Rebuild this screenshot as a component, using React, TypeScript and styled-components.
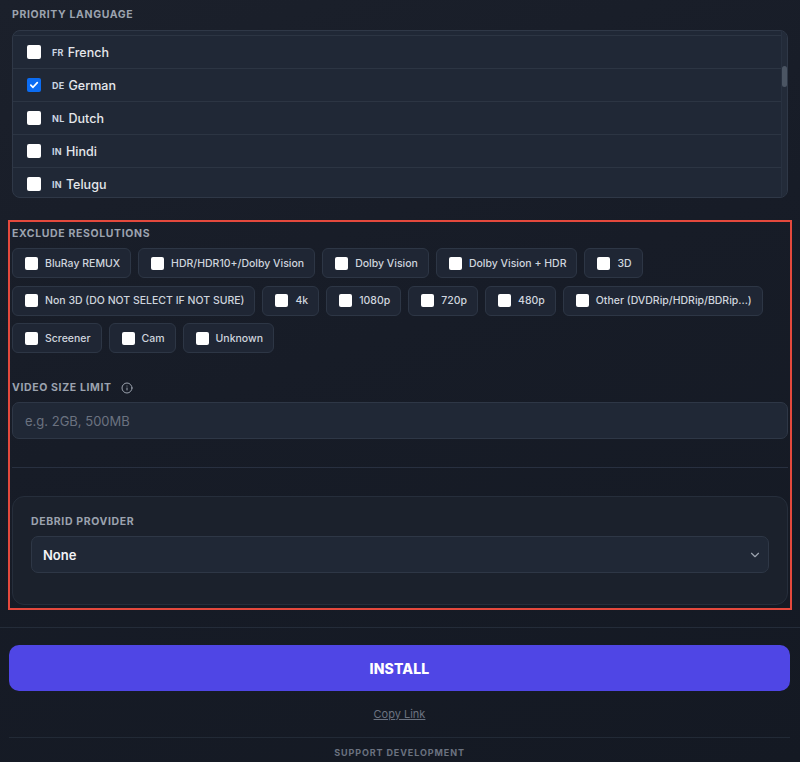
import React from 'react';
import styled, { createGlobalStyle } from 'styled-components';
import { ChevronDown, Info } from 'lucide-react';

const GlobalStyle = createGlobalStyle`
    html, body {
        margin: 0;
        padding: 0;
        background: #161b26;
    }
    body {
        font-family: Inter, "Noto Sans", "Liberation Sans", sans-serif;
        color: #e5e7eb;
        -webkit-font-smoothing: antialiased;
    }
    * {
        box-sizing: border-box;
    }
`;

// ---------------- <Page /> ---------------

const Page = styled.div`
    min-height: 762px;
    background: linear-gradient(160deg, #1b202b 0%, #171c27 45%, #141923 100%);
    padding-top: 9px;
`;

const Content = styled.div`
    padding: 0 12px;
`;

const SectionLabel = styled.div<{ $gap?: number }>`
    display: flex;
    align-items: center;
    gap: 9px;
    font-size: 10.5px;
    line-height: 12px;
    font-weight: 700;
    letter-spacing: 0.06em;
    text-transform: uppercase;
    color: #9ca3af;
    margin-bottom: ${(p) => p.$gap ?? 8}px;
`;

// ---------------- <LanguageList /> ---------------
// the list is shown scrolled: the rows above French are out of view,
// only the last pixels of the previous row remain at the top

const LanguageList = styled.div`
    display: flex;
    height: 168px;
    overflow: hidden;
    background: #202836;
    border: 1px solid #2f3847;
    border-radius: 8px;
`;

const Rows = styled.div`
    flex: 1;
    min-width: 0;
`;

const ScrolledEdge = styled.div`
    height: 5px;
    border-bottom: 1px solid #2c3543;
`;

const ScrollTrack = styled.div`
    width: 6px;
    flex-shrink: 0;
    background: #232b39;
    border-left: 1px solid #283140;
`;

const ScrollThumb = styled.div<{ $top: number; $size: number }>`
    margin-top: ${(p) => p.$top}px;
    height: ${(p) => p.$size}px;
    border-radius: 3px;
    background: #4b5563;
`;

const LanguageRow = styled.label`
    display: flex;
    align-items: center;
    height: 33px;
    padding-left: 14px;
    border-bottom: 1px solid #2c3543;
`;

const LangCode = styled.span`
    margin-left: 11px;
    margin-right: 4px;
    font-size: 9px;
    font-weight: 700;
    letter-spacing: 0.03em;
    color: #cbd5e1;
`;

const LangName = styled.span`
    font-size: 12.5px;
    font-weight: 500;
    color: #e5e7eb;
`;

// ---------------- <CheckBox /> ---------------

const Box = styled.span<{ $size: number; $checked?: boolean }>`
    display: inline-flex;
    align-items: center;
    justify-content: center;
    flex-shrink: 0;
    width: ${(p) => p.$size}px;
    height: ${(p) => p.$size}px;
    border-radius: 2px;
    background: ${(p) => (p.$checked ? '#0b6cf2' : '#ffffff')};
`;

const CheckBox = ({ size, checked }: { size: number; checked?: boolean }) => (
    <Box $size={size} $checked={checked}>
        {checked && (
            <svg width={size - 4} height={size - 4} viewBox="0 0 10 10">
                <path d="M1.8 5.2 L4 7.3 L8.3 2.6" fill="none" stroke="#fff" strokeWidth="1.7"
                    strokeLinecap="round" strokeLinejoin="round" />
            </svg>
        )}
    </Box>
);

// ---------------- <HighlightSection /> ---------------

const HighlightSection = styled.section`
    margin-top: 26px;
    padding: 4px 0 1px;
    outline: 2px solid #e4493d;
    outline-offset: 2px;
    display: flex;
    flex-direction: column;
`;

const ChipGrid = styled.div`
    display: flex;
    flex-wrap: wrap;
    column-gap: 7px;
    row-gap: 7.5px;
`;

const Chip = styled.label`
    display: inline-flex;
    align-items: center;
    gap: 7px;
    height: 30px;
    padding: 0 10px 0 12px;
    background: #1f2634;
    border: 1px solid #2d3645;
    border-radius: 6px;
    font-size: 10.5px;
    font-weight: 500;
    color: #cfd5de;
    white-space: nowrap;
`;

const Field = styled.div`
    margin-top: 29px;
`;

const TextInput = styled.input`
    display: block;
    width: 100%;
    height: 37px;
    padding: 0 12px;
    background: #202836;
    border: 1px solid #2e3746;
    border-radius: 7px;
    font-family: inherit;
    font-size: 13px;
    color: #e5e7eb;
    outline: none;

    &::placeholder {
        color: #6b7280;
    }
`;

const Divider = styled.hr`
    margin: 28px 0 0;
    border: none;
    border-top: 1px solid #283040;
`;

const ProviderCard = styled.div`
    margin-top: 28px;
    padding: 19px 18px 31px;
    background: #1b212c;
    border: 1px solid #262e3b;
    border-radius: 12px;
`;

const SelectWrap = styled.div`
    position: relative;
    color: #9ca3af;

    svg {
        position: absolute;
        right: 7px;
        top: 12px;
        pointer-events: none;
    }
`;

const Select = styled.select`
    appearance: none;
    display: block;
    width: 100%;
    height: 37px;
    padding: 0 11px;
    background: #202836;
    border: 1px solid #2e3746;
    border-radius: 7px;
    font-family: inherit;
    font-size: 13px;
    font-weight: 600;
    color: #f3f4f6;
    outline: none;
`;

// ---------------- <Footer /> ---------------

const Footer = styled.footer`
    margin-top: 21px;
    border-top: 1px solid #242c39;
    padding: 17px 10px 0 9px;
    display: flex;
    flex-direction: column;
    align-items: center;
`;

const InstallButton = styled.button`
    width: 100%;
    height: 46px;
    border: none;
    border-radius: 10px;
    background: #4f46e5;
    color: #ffffff;
    font-family: inherit;
    font-size: 14px;
    font-weight: 800;
    letter-spacing: 0.01em;
`;

const CopyLink = styled.a`
    margin-top: 16px;
    font-size: 11px;
    line-height: 14px;
    color: #6b7280;
    text-decoration: underline;
`;

const FooterRule = styled.div`
    align-self: stretch;
    margin-top: 16px;
    border-top: 1px solid #222a36;
`;

const SupportTitle = styled.div`
    margin-top: 9px;
    font-size: 9px;
    line-height: 11px;
    font-weight: 700;
    letter-spacing: 0.1em;
    color: #6b7280;
`;

const visibleLanguages: [string, string][] = [
    ['FR', 'French'], ['DE', 'German'], ['NL', 'Dutch'], ['IN', 'Hindi'], ['IN', 'Telugu'],
];

const resolutions = [
    'BluRay REMUX', 'HDR/HDR10+/Dolby Vision', 'Dolby Vision', 'Dolby Vision + HDR', '3D',
    'Non 3D (DO NOT SELECT IF NOT SURE)', '4k', '1080p', '720p', '480p',
    'Other (DVDRip/HDRip/BDRip...)', 'Screener', 'Cam', 'Unknown',
];

export default function App() {
    return (
        <>
            <GlobalStyle />
            <Page>
                <Content>
                    <SectionLabel $gap={9}>Priority Language</SectionLabel>
                    <LanguageList>
                        <Rows>
                            <ScrolledEdge />
                            {visibleLanguages.map(([code, name]) => (
                                <LanguageRow key={name}>
                                    <CheckBox size={14} checked={name === 'German'} />
                                    <LangCode>{code}</LangCode>
                                    <LangName>{name}</LangName>
                                </LanguageRow>
                            ))}
                        </Rows>
                        <ScrollTrack>
                            <ScrollThumb $top={35} $size={21} />
                        </ScrollTrack>
                    </LanguageList>

                    <HighlightSection>
                        <SectionLabel>Exclude Resolutions</SectionLabel>
                        <ChipGrid>
                            {resolutions.map((r) => (
                                <Chip key={r}>
                                    <CheckBox size={13} />
                                    {r}
                                </Chip>
                            ))}
                        </ChipGrid>

                        <Field>
                            <SectionLabel>
                                Video Size Limit
                                <Info size={12} strokeWidth={2} />
                            </SectionLabel>
                            <TextInput placeholder="e.g. 2GB, 500MB" />
                        </Field>

                        <Divider />

                        <ProviderCard>
                            <SectionLabel>Debrid Provider</SectionLabel>
                            <SelectWrap>
                                <Select defaultValue="none">
                                    <option value="none">None</option>
                                    <option value="rd">Real-Debrid</option>
                                    <option value="ad">AllDebrid</option>
                                </Select>
                                <ChevronDown size={14} strokeWidth={2} />
                            </SelectWrap>
                        </ProviderCard>
                    </HighlightSection>
                </Content>

                <Footer>
                    <InstallButton>INSTALL</InstallButton>
                    <CopyLink>Copy Link</CopyLink>
                    <FooterRule />
                    <SupportTitle>SUPPORT DEVELOPMENT</SupportTitle>
                </Footer>
            </Page>
        </>
    );
}
